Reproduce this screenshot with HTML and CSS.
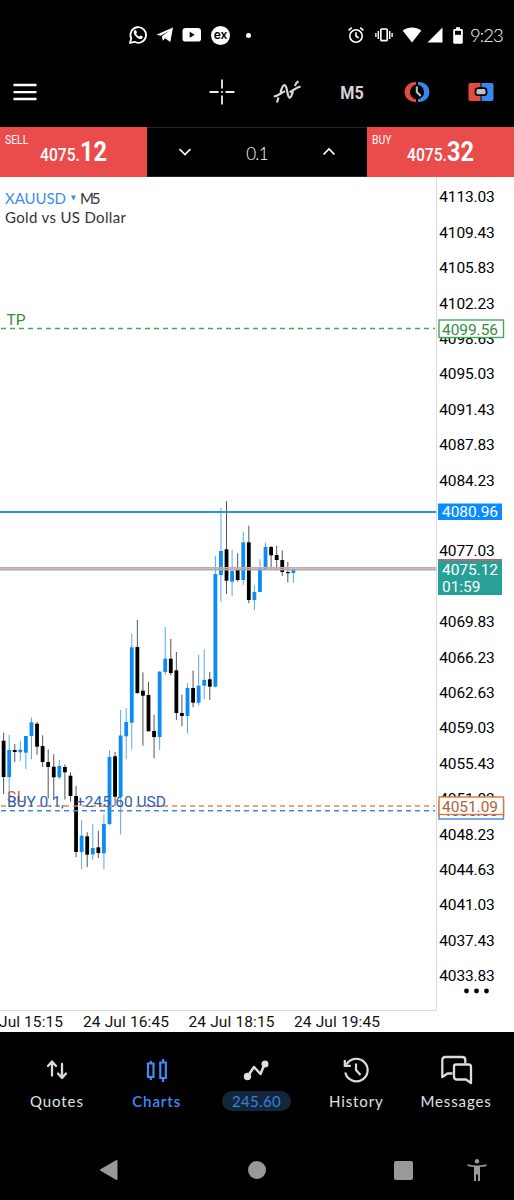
FILE: index.html
```html
<!DOCTYPE html>
<html lang="en">
<head>
    <meta charset="UTF-8">
    <meta name="viewport" content="width=device-width, initial-scale=1.0">
    <title>XAUUSD M5</title>
    <link rel="stylesheet" href="styles.css">
</head>
<body>
    <header class="status-bar">
        <div class="notifications">
            <svg width="20" height="20" viewBox="0 0 20 20"><path d="M2 18l1.3-4.5A7.8 7.8 0 1 1 6.500 16.800z" fill="none" stroke="#fff" stroke-width="1.8" stroke-linejoin="round"/><path d="M6.600 5.500c.5-.6 1.400-.5 1.700.2l.6 1.500c.1.600-.7 1.200-.7 1.500.7 1.400 1.700 2.300 3.200 2.900.5 0 1-1.200 1.500-1l1.700.9c.7.500-.1 2-1.300 2.400-2.600.8-7.500-3.400-7.600-6.500 0-.7.300-1.400.9-1.900z" fill="#fff"/></svg>
            <svg width="18" height="18" viewBox="0 0 18 18"><path d="M.4 8.700 17 1.500 14.300 16l-5.200-3.800-2.400 2.500-.8-4.500 7.400-5.500-8.600 5z" fill="#fff"/></svg>
            <svg width="20" height="16" viewBox="0 0 20 16"><rect x=".5" y="1" width="18.500" height="13.600" rx="3.200" fill="#fff"/><path d="M7.700 4.800v6l5-3z" fill="#000"/></svg>
            <span class="ex-badge">ex</span>
            <span class="more-dot"></span>
        </div>
        <div class="system-icons">
            <svg width="18" height="18" viewBox="0 0 18 18" fill="none" stroke="#fff" stroke-width="1.600"><circle cx="9" cy="10" r="6.200"/><path d="M9 6.300V10l2.600 2M1.600 4.400l3.200-2.700M16.400 4.400l-3.200-2.700"/></svg>
            <svg width="18" height="16" viewBox="0 0 18 16" fill="none" stroke="#fff"><rect x="5.800" y="2" width="6.400" height="11.600" rx=".8" stroke-width="1.700"/><path d="M3.300 4v8M.9 6v4M14.700 4v8M17.100 6v4" stroke-width="1.400"/></svg>
            <svg class="wifi" width="20" height="16" viewBox="0 0 20 16"><path d="M.8 3.800C6-.6 14-.6 19.200 3.800L10 15.600z" fill="#fff"/></svg>
            <svg width="16" height="16" viewBox="0 0 16 16"><path d="M.5 15.500h15V.5z" fill="#fff"/></svg>
            <svg class="battery" width="10" height="17" viewBox="0 0 10 17"><path d="M3 .3h4V2h1.500q1.300 0 1.300 1.300v12.200q0 1.300-1.300 1.300h-7Q.2 16.800.2 15.500V3.300Q.2 2 1.500 2H3z" fill="#fff"/><path d="M2 3.800h6v4H2z" fill="#000"/></svg>
            <span class="time">9:23</span>
        </div>
    </header>

    <nav class="toolbar">
        <svg class="menu" width="24" height="26" viewBox="0 0 24 26"><path d="M.5 6h23M.5 13.200h23M.5 20h23" stroke="#fff" stroke-width="2.300"/></svg>
        <div class="tools">
            <svg width="26" height="26" viewBox="0 0 26 26"><path d="M13 .5v9M13 16.500v9M.5 13h9M16.500 13h9M12.200 13h1.600" stroke="#f0f0f0" stroke-width="1.800"/></svg>
            <svg width="28" height="26" viewBox="0 0 28 26" fill="none" stroke="#d9d9d9" stroke-width="2.200"><path d="M4 23.500 5.500 18.500M7.500 13.500C9 8 10 6.200 11.500 6.200c3 0 2.500 12.500 5.200 12.500 1.800 0 2.200-4 3.300-6.500M21.800 6.800Q23 3.500 25.500 2.200M.7 17.500C5 17.500 8 13.500 12 12.300M16.500 13.200C20 12.500 23 8 27.500 7.600"/></svg>
            <span class="timeframe">M5</span>
            <svg width="26" height="24" viewBox="0 0 26 24"><path d="M12 2H10.500a10 10 0 0 0 0 20H12v-2.800a7.300 7.300 0 0 1 0-14.400z" fill="#e24b3f"/><path d="M14 2h1.500a10 10 0 0 1 0 20H14v-2.800a7.300 7.300 0 0 0 0-14.400z" fill="#3687f0"/><path d="M12.800 6.500V12l4 4" fill="none" stroke="#bcc5cc" stroke-width="2"/></svg>
            <svg width="26" height="24" viewBox="0 0 26 24"><path d="M2.500 3H12.500v18h-10Q.5 21 .5 19V5q0-2 2-2z" fill="#e24b3f"/><path d="M13.500 3h10q2 0 2 2v14q0 2-2 2h-10z" fill="#3687f0"/><rect x="7.500" y="8.200" width="11" height="7" rx="2.800" fill="#bfc3c7" stroke="#000" stroke-width="1.800"/></svg>
        </div>
    </nav>

    <section class="trade-panel">
        <button class="price-btn">
            <span class="side">SELL</span>
            <span class="price">4075.<b>12</b></span>
        </button>
        <div class="volume">
            <svg width="14" height="10" viewBox="0 0 14 10"><path d="M1.500 2 7 7.500 12.500 2" fill="none" stroke="#fff" stroke-width="1.700"/></svg>
            <span>0.1</span>
            <svg width="14" height="10" viewBox="0 0 14 10"><path d="M1.500 7.500 7 2l5.500 5.500" fill="none" stroke="#fff" stroke-width="1.700"/></svg>
        </div>
        <button class="price-btn">
            <span class="side">BUY</span>
            <span class="price">4075.<b>32</b></span>
        </button>
    </section>

    <main class="chart-area">
        <svg class="chart" width="514" height="855" viewBox="0 177 514 855">
            <path class="frame" d="M436.500 177v834M0 1010.500h437"/>
            <g id="candles"></g>

            <path d="M0 511.900h436" stroke="#2b92ea" stroke-width="2"/>
            <path d="M0 569.500h436" stroke="#93b5b1" stroke-width="2"/>
            <path d="M0 567.700h436" stroke="#e3a09d" stroke-width="1.600"/>
            <path class="level" d="M1 328.500h434" stroke="#43a85a"/>
            <path class="level" d="M1 806h434" stroke="#dc8c4f"/>
            <path class="level" d="M1 810.800h434" stroke="#4287e8"/>

            <text class="line-label" x="6.500" y="325" fill="#398b43" textLength="19">TP</text>
            <text class="line-label" x="7" y="802" fill="#ba6742" textLength="18">SL</text>
            <text class="line-label" x="7" y="806.500" fill="#315fb4" textLength="57">BUY 0.1,</text>
            <text class="line-label" x="76" y="806.500" fill="#315fb4" textLength="90">+245.60 USD</text>

            <text class="symbol" x="5" y="203.500" fill="#3f8cf0" textLength="61">XAUUSD</text>
            <path d="M71 195.500h5l-2.500 5z" fill="#3f8cf0"/>
            <text class="symbol" x="80" y="203.500" fill="#333" textLength="20.500">M5</text>
            <text class="symbol" x="5" y="223" fill="#333" textLength="121">Gold vs US Dollar</text>

            <g id="price-axis"></g>

            <rect x="439" y="320" width="64.500" height="17.500" fill="#fff" stroke="#43a85a" stroke-width="1.400"/>
            <text class="axis" x="442" y="334.500" fill="#398b43" textLength="56">4099.56</text>

            <rect x="438" y="503.500" width="64" height="16.500" fill="#0a8cff"/>
            <text class="axis" x="442" y="517.300" fill="#fff" textLength="56">4080.96</text>

            <rect x="438" y="559" width="64" height="36" fill="#27a198"/>
            <path d="M438 560h64" stroke="#b06a69" stroke-width="2"/>
            <text class="axis" x="442" y="575" fill="#fff" textLength="56">4075.12</text>
            <text class="axis" x="442" y="592.300" fill="#fff" textLength="38.500">01:59</text>

            <rect x="439" y="801.500" width="64.500" height="17.500" fill="#fff" stroke="#4287e8" stroke-width="1.400"/>
            <text class="axis" x="442" y="816" fill="#315fb4" textLength="56">4050.66</text>
            <rect x="439" y="797" width="64.500" height="17.500" fill="#fff" stroke="#e2762f" stroke-width="1.400"/>
            <text class="axis" x="442" y="811.500" fill="#ad5f3c" textLength="56">4051.09</text>

            <g fill="#000"><circle cx="466.500" cy="991" r="2.400"/><circle cx="476.500" cy="991" r="2.400"/><circle cx="486.500" cy="991" r="2.400"/></g>

            <g class="axis" fill="#111">
                <text x="-1" y="1027" textLength="64">Jul 15:15</text>
                <text x="83" y="1027" textLength="86">24 Jul 16:45</text>
                <text x="188.500" y="1027" textLength="86">24 Jul 18:15</text>
                <text x="294" y="1027" textLength="86">24 Jul 19:45</text>
            </g>
        </svg>
    </main>

    <nav class="tabs">
        <a class="tab">
            <svg width="30" height="30" viewBox="0 0 30 30" fill="none" stroke="#dcdcdc" stroke-width="2.300" stroke-linecap="round" stroke-linejoin="round"><path d="M10 20.500V7M6 11l4-4.500 4 4.500M20 9v13.500M16 18.500l4 4.500 4-4.500"/></svg>
            <span>Quotes</span>
        </a>
        <a class="tab active">
            <svg width="30" height="30" viewBox="0 0 30 30" fill="none" stroke="#3f8cf7" stroke-width="2.200"><path d="M6 8.500h5.500V22H6zM18.300 7.500h5.500v15.500h-5.500zM8.800 6v2.500M8.800 22v3M21 4v3.500M21 23v4"/></svg>
            <span>Charts</span>
        </a>
        <a class="tab">
            <svg width="30" height="30" viewBox="0 0 30 30"><path d="M6.500 21.500 13 12l6.500 7 4.500-11" fill="none" stroke="#e0e0e0" stroke-width="2.500" stroke-linejoin="round"/><circle cx="6.500" cy="21.500" r="3.700" fill="#e0e0e0"/><circle cx="24" cy="9" r="3.500" fill="#e0e0e0"/></svg>
            <span class="profit">245.60</span>
        </a>
        <a class="tab">
            <svg width="30" height="30" viewBox="0 0 30 30" fill="none" stroke="#dcdcdc" stroke-width="2.200"><path d="M4.300 17.500A11.300 11.300 0 1 0 5.500 9.500M3.800 5v5.800h6M15 8.500V15l4.500 5"/></svg>
            <span>History</span>
        </a>
        <a class="tab">
            <svg width="34" height="30" viewBox="0 0 34 30" fill="none" stroke="#dcdcdc" stroke-width="2.300" stroke-linejoin="round"><path d="M13.500 18.500H8.500L3.300 22V5q0-3 3-3h17q3 0 3 3v3.500"/><path d="M17 9.500h12.500q2.500 0 2.500 2.500v16l-5-3.500H18q-3 0-3-3V11.500q0-2 2-2z"/></svg>
            <span>Messages</span>
        </a>
    </nav>

    <footer class="system-nav">
        <svg width="20" height="22" viewBox="0 0 20 22"><path d="M17.500 2v18L2 11z" fill="#999" stroke="#999" stroke-width="2" stroke-linejoin="round"/></svg>
        <span class="home"></span>
        <span class="recents"></span>
        <svg width="20" height="22" viewBox="0 0 20 22"><circle cx="10" cy="2.300" r="2.200" fill="#999"/><path d="M.5 5.200Q10 7.600 19.500 5.200V7Q16 7.800 13 8v14h-2v-6.500H9V22H7V8Q4 7.800.5 7z" fill="#999"/></svg>
    </footer>

    <script src="chart.js"></script>
</body>
</html>
```
FILE: styles.css
```css
* {
    box-sizing: border-box;
}

body {
    margin: 0;
    width: 514px;
    height: 1200px;
    overflow: hidden;
    background: #000;
    color: #fff;
    font-family: Lato, "Open Sans", sans-serif;
}

svg {
    display: block;
    flex: none;
}

.status-bar {
    display: flex;
    justify-content: space-between;
    height: 70px;
    padding: 0 12px 0 128px;
}

.notifications,
.system-icons {
    display: flex;
    align-items: center;
}

.notifications {
    gap: 8px;
}

.ex-badge {
    width: 19px;
    height: 19px;
    margin-left: 1px;
    border-radius: 50%;
    background: #fff;
    color: #000;
    font: 600 12px/18px Inter, sans-serif;
    text-align: center;
}

.more-dot {
    width: 5px;
    height: 5px;
    margin-left: 8px;
    border-radius: 50%;
    background: #fff;
}

.system-icons {
    gap: 10px;
}

.system-icons .wifi {
    margin: 0 -5px 0 -1px;
}

.system-icons .battery {
    margin-right: -3px;
}

.time {
    width: 32px;
    font-size: 18.5px;
    font-weight: 300;
    letter-spacing: -1px;
    white-space: nowrap;
}

.toolbar {
    display: flex;
    align-items: center;
    justify-content: space-between;
    height: 57px;
    padding: 0 20px 13px 13px;
}

.tools {
    display: flex;
    align-items: center;
    gap: 38.3px;
}

.timeframe {
    width: 26px;
    font: 700 18px Roboto, sans-serif;
    color: #d5d5d5;
    text-align: center;
    transform: scaleX(0.9);
}

.trade-panel {
    display: grid;
    grid-template-columns: 147px 220px 147px;
    height: 50px;
}

.price-btn {
    display: flex;
    flex-direction: column;
    align-items: flex-start;
    padding: 6px 5px 0;
    border: none;
    background: #ea4c4c;
    color: #fff;
    font-family: Roboto, sans-serif;
}

.side {
    font-size: 12.5px;
    line-height: 13px;
    transform: scaleX(0.83);
    transform-origin: left;
}

.price {
    align-self: center;
    margin-top: -7px;
    font-size: 18px;
    font-weight: 500;
    line-height: 27px;
    transform: scaleX(0.87);
}

.price b {
    font-size: 27px;
    font-weight: 700;
}

.volume {
    display: flex;
    align-items: center;
    justify-content: space-between;
    padding: 2px 31px 0;
    border-top: 1px solid #22252b;
    border-bottom: 1px solid #22252b;
    font-size: 17px;
    font-weight: 300;
}

.volume svg {
    margin-top: -2px;
}

.volume span {
    letter-spacing: -0.7px;
}

.chart-area {
    height: 855px;
    background: #fff;
}

.frame {
    fill: none;
    stroke: #dcdcdc;
}

.level {
    stroke-width: 1.5;
    stroke-dasharray: 5 4;
}

.axis {
    font-family: Roboto, sans-serif;
    font-size: 15.5px;
}

.line-label {
    font-family: Roboto, sans-serif;
    font-size: 15.5px;
}

.symbol {
    font-family: Lato, sans-serif;
    font-size: 15px;
}

.tabs {
    display: flex;
    height: 108px;
    padding: 23px 8px 0 7px;
}

.tab {
    flex: 1;
    display: flex;
    flex-direction: column;
    align-items: center;
    gap: 6px;
    color: #e2e2e2;
    font-size: 15px;
    line-height: 20px;
    letter-spacing: 0.9px;
}

.active {
    color: #3f8cf7;
    font-weight: 600;
}

.profit {
    width: 69px;
    border-radius: 10px;
    background: #14263c;
    color: #397fdc;
    letter-spacing: 0.3px;
    text-align: center;
}

.system-nav {
    display: flex;
    align-items: center;
    height: 60px;
    padding-left: 99px;
}

.home {
    width: 18px;
    height: 18px;
    margin-left: 129px;
    border-radius: 50%;
    background: #999;
}

.recents {
    width: 19px;
    height: 19px;
    margin: 0 54px 0 128px;
    border-radius: 2px;
    background: #999;
}
```
FILE: chart.js
```js
const SVG_NS = 'http://www.w3.org/2000/svg';

// [up, body top, body bottom, wick top, wick bottom]
const candles = [
    [0, 740.7, 777, 732.7, 794],
    [1, 750, 777, 735, 797],
    [0, 750, 752, 744, 762],
    [1, 749.7, 752.3, 741, 761],
    [1, 736, 752.7, 736, 769],
    [1, 722.3, 736, 717.7, 759.3],
    [0, 723.7, 746.7, 722, 754.7],
    [0, 746, 762, 735.3, 767],
    [0, 762, 767, 749.3, 798.5],
    [0, 766.7, 777.3, 754.3, 800],
    [1, 766, 777.3, 760, 779.5],
    [0, 767, 772.3, 764.3, 799.5],
    [0, 775.7, 796, 772.3, 801.7],
    [0, 796, 852, 786, 857.3],
    [1, 835.7, 852, 820, 869.3],
    [0, 836.3, 854.7, 832.3, 867],
    [1, 848, 854.3, 823.7, 859.7],
    [0, 847.3, 853, 830.7, 858],
    [1, 824, 853.3, 814.3, 869.3],
    [1, 757, 824, 750.3, 825],
    [0, 756.3, 796.7, 752, 806],
    [1, 735.5, 796.7, 710, 834.3],
    [1, 722, 736.3, 708, 759.3],
    [1, 647.3, 722.7, 633.7, 749.3],
    [0, 647, 693, 620, 694],
    [0, 690.7, 695.7, 672.3, 745.7],
    [0, 695, 731.3, 681.7, 731.3],
    [0, 731, 737, 714.7, 758.3],
    [1, 671.7, 737, 671, 750],
    [1, 658.7, 672, 627, 675.3],
    [0, 658.7, 673, 639, 675.3],
    [0, 670.3, 713, 652, 720],
    [0, 713, 716, 694.7, 726.3],
    [1, 688, 716, 683, 733.3],
    [0, 688, 702.7, 670.7, 707.3],
    [1, 685.7, 702.7, 654.7, 705.7],
    [1, 680, 685.7, 649.3, 699.3],
    [0, 679.3, 686.7, 672, 700],
    [1, 574, 686.7, 556, 687.3],
    [1, 551, 575, 508, 602],
    [0, 549.3, 580.7, 501, 594],
    [1, 571, 581.7, 550, 596.3],
    [0, 570, 580, 553.3, 581.7],
    [1, 542.3, 580, 532, 585],
    [0, 542.3, 600, 525.7, 603.3],
    [1, 592, 600, 585.3, 610],
    [1, 568.3, 592, 559.3, 592],
    [1, 547, 569.3, 542.7, 570],
    [0, 547, 555.3, 546, 570],
    [0, 555, 560, 545.7, 569.3],
    [0, 560, 572, 550.3, 576],
    [0, 572, 573.2, 562, 582.3],
    [1, 569.7, 573, 568, 582.7]
];

function addRect(parent, x, y, width, height, fill) {
    const rect = document.createElementNS(SVG_NS, 'rect');
    rect.setAttribute('x', x);
    rect.setAttribute('y', y);
    rect.setAttribute('width', width);
    rect.setAttribute('height', height);
    rect.setAttribute('fill', fill);
    parent.appendChild(rect);
}

const candleGroup = document.getElementById('candles');
candles.forEach(([up, top, bottom, high, low], i) => {
    const x = 3.6 + i * 5.573;
    addRect(candleGroup, x - 0.5, high, 1, low - high, up ? '#55a9ef' : '#555');
    addRect(candleGroup, x - 1.9, top, 3.8, bottom - top, up ? '#0d8bf5' : '#000');
});

// Price scale, one label every 3.60
const axisGroup = document.getElementById('price-axis');
for (let i = 0; i < 23; i++) {
    const label = document.createElementNS(SVG_NS, 'text');
    label.setAttribute('class', 'axis');
    label.setAttribute('x', 439.3);
    label.setAttribute('y', 202.3 + i * 35.4);
    label.setAttribute('textLength', 55.5);
    label.textContent = (4113.03 - i * 3.6).toFixed(2);
    // 4080.63 and 4073.43 lie under the price tags
    if (i !== 9 && i !== 11) {
        axisGroup.appendChild(label);
    }
}
```
